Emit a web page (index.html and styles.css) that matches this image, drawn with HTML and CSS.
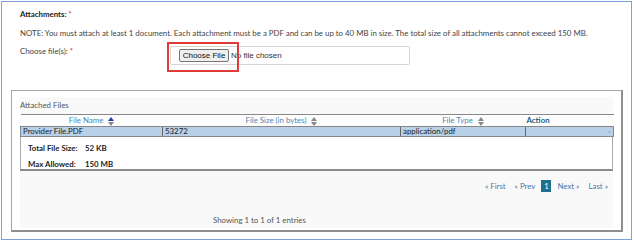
FILE: index.html
```html
<!DOCTYPE html>
<html>
<head>
<meta charset="utf-8">
<link rel="stylesheet" href="styles.css">
</head>
<body>
<div class="frame">
  <div class="title">Attachments: <span class="req">*</span></div>
  <div class="note">NOTE: You must attach at least 1 document. Each attachment must be a PDF and can be up to 40 MB in size. The total size of all attachments cannot exceed 150 MB.</div>
  <div class="file-row">
    <div class="file-label">Choose file(s): <span class="req">*</span></div>
    <div class="file-box">
      <span class="btn">Choose File</span><span class="nofile">No file chosen</span>
      <span class="highlight"></span>
    </div>
  </div>
  <div class="panel">
    <div class="panel-inner">
      <div class="caption">Attached Files</div>
      <table class="grid">
        <colgroup>
          <col class="c1"><col class="c2"><col class="c3"><col class="c4">
        </colgroup>
        <thead>
          <tr>
            <th class="sortable">File Name <span class="sort"><span class="up active"></span><span class="down"></span></span></th>
            <th class="sortable">File Size (in bytes) <span class="sort"><span class="up"></span><span class="down"></span></span></th>
            <th class="sortable">File Type <span class="sort"><span class="up"></span><span class="down"></span></span></th>
            <th class="action">Action</th>
          </tr>
        </thead>
        <tbody>
          <tr class="sel">
            <td>Provider File.PDF</td>
            <td>53272</td>
            <td>application/pdf</td>
            <td class="x">×</td>
          </tr>
        </tbody>
      </table>
      <div class="summary">
        <div class="sum-line"><span class="sum-label">Total File Size:</span><span>52 KB</span></div>
        <div class="sum-line"><span class="sum-label">Max Allowed:</span><span>150 MB</span></div>
      </div>
      <div class="pager">
        <span class="pg">« First</span>
        <span class="pg">« Prev</span>
        <span class="pg cur">1</span>
        <span class="pg">Next »</span>
        <span class="pg">Last »</span>
      </div>
      <div class="info">Showing 1 to 1 of 1 entries</div>
    </div>
  </div>
</div>
</body>
</html>
```

FILE: styles.css
```css
html, body {
  margin: 0;
  padding: 0;
  background: #ffffff;
}
body {
  font-family: "Lato", "Liberation Sans", sans-serif;
  font-size: 7.85px;
  color: #333333;
}
.frame {
  margin: 1px 0 0 1px;
  width: 620px;
  height: 237px;
  border: 1px solid #7f9fdb;
  padding: 0 0 0 9px;
  box-sizing: content-box;
  overflow: hidden;
}
.frame > .title, .frame > .note, .frame > .file-row {
  padding-left: 9px;
}
.title {
  font-weight: bold;
  color: #222;
  margin-top: 6px;
  line-height: 12px;
}
.req { color: #d33; font-weight: normal; }
.note {
  margin-top: 7px;
  line-height: 12px;
  color: #444;
}
.file-row {
  display: flex;
  margin-top: 7px;
}
.file-label {
  width: 150px;
  line-height: 11px;
  color: #444;
}
.file-box {
  position: relative;
  width: 230px;
  height: 17px;
  border: 1px solid #d6d6d6;
  border-radius: 2px;
  display: flex;
  align-items: center;
  padding-left: 8px;
  font-family: "Liberation Sans", Arial, sans-serif;
  font-size: 8px;
}
.btn {
  border: 1px solid #767676;
  background: #efefef;
  border-radius: 2px;
  padding: 1px 2px;
  line-height: 9px;
  color: #111;
  width: 44px;
  text-align: center;
}
.nofile { margin-left: 2px; color: #333; }
.highlight {
  position: absolute;
  left: -4px;
  top: -5px;
  width: 68px;
  height: 26px;
  border: 2px solid #e03a3a;
}
.panel {
  margin-top: 25px;
  width: 593px;
  height: 131px;
  border: 1px solid #a6a6a6;
  border-right: 2px solid #8f8f8f;
  border-bottom: 2px solid #8f8f8f;
  padding: 6px 8px 2px 8px;
  background: #fff;
}
.panel-inner {
  background: #f9f9f9;
  height: 131px;
}
.caption {
  line-height: 11px;
  padding-top: 3px;
  height: 14px;
  color: #555;
}
.grid {
  width: 593px;
  border-collapse: collapse;
  table-layout: fixed;
  font-size: 7.85px;
}
.c1 { width: 142px; }
.c2 { width: 238px; }
.c3 { width: 125px; }
.c4 { width: 88px; }
.grid th {
  height: 10px;
  padding: 0;
  font-weight: normal;
  color: #4d88b0;
  background: #fdfdfd;
  border-top: 1px solid #888;
  border-bottom: 1px solid #888;
  line-height: 10px;
  text-align: center;
  white-space: nowrap;
}
.grid th.action {
  text-align: left;
  font-weight: bold;
  color: #1d5f7c;
  padding-left: 1px;
}
.sort {
  display: inline-flex;
  flex-direction: column;
  vertical-align: middle;
  margin-left: 3px;
  gap: 1px;
}
.up, .down {
  width: 0;
  height: 0;
  border-left: 3px solid transparent;
  border-right: 3px solid transparent;
}
.up { border-bottom: 4px solid #888; }
.down { border-top: 4px solid #888; }
.up.active { border-bottom-color: #1f3fb0; }
.grid td {
  background: #b8d0e8;
  height: 9px;
  padding: 0 2px;
  line-height: 9px;
  color: #222;
  border-left: 1px solid #666;
  border-bottom: 1px solid #888;
}
.grid td:first-child { border-left: 1px solid #888; }
.grid td:last-child { border-right: 1px solid #888; }
.grid td.x { text-align: right; color: #a0a8b8; font-size: 6px; }
.summary {
  background: #fff;
  border-left: 1px solid #aaa;
  border-right: 1px solid #aaa;
  border-bottom: 2px solid #8a8a8a;
  padding: 3px 0 0 7px;
  box-sizing: border-box;
  height: 34px;
}
.sum-line {
  line-height: 16px;
  font-weight: bold;
  color: #222;
}
.sum-label {
  display: inline-block;
  width: 57px;
}
.pager {
  display: flex;
  justify-content: flex-end;
  align-items: center;
  margin-top: 9px;
  padding-right: 5px;
  color: #4677aa;
  height: 12px;
}
.pg { margin-left: 7px; }
.pg:first-child { margin-left: 0; }
.pg.cur {
  background: #1f6f8f;
  color: #fff;
  width: 10px;
  height: 12px;
  line-height: 12px;
  text-align: center;
  margin-left: 6px;
}
.pg.cur + .pg { margin-left: 6px; }
.pg:last-child { margin-left: 9px; }
.pg:nth-child(2) { margin-left: 9px; }
.info {
  margin-top: 22px;
  padding-left: 193px;
  color: #555;
  line-height: 12px;
}
```
